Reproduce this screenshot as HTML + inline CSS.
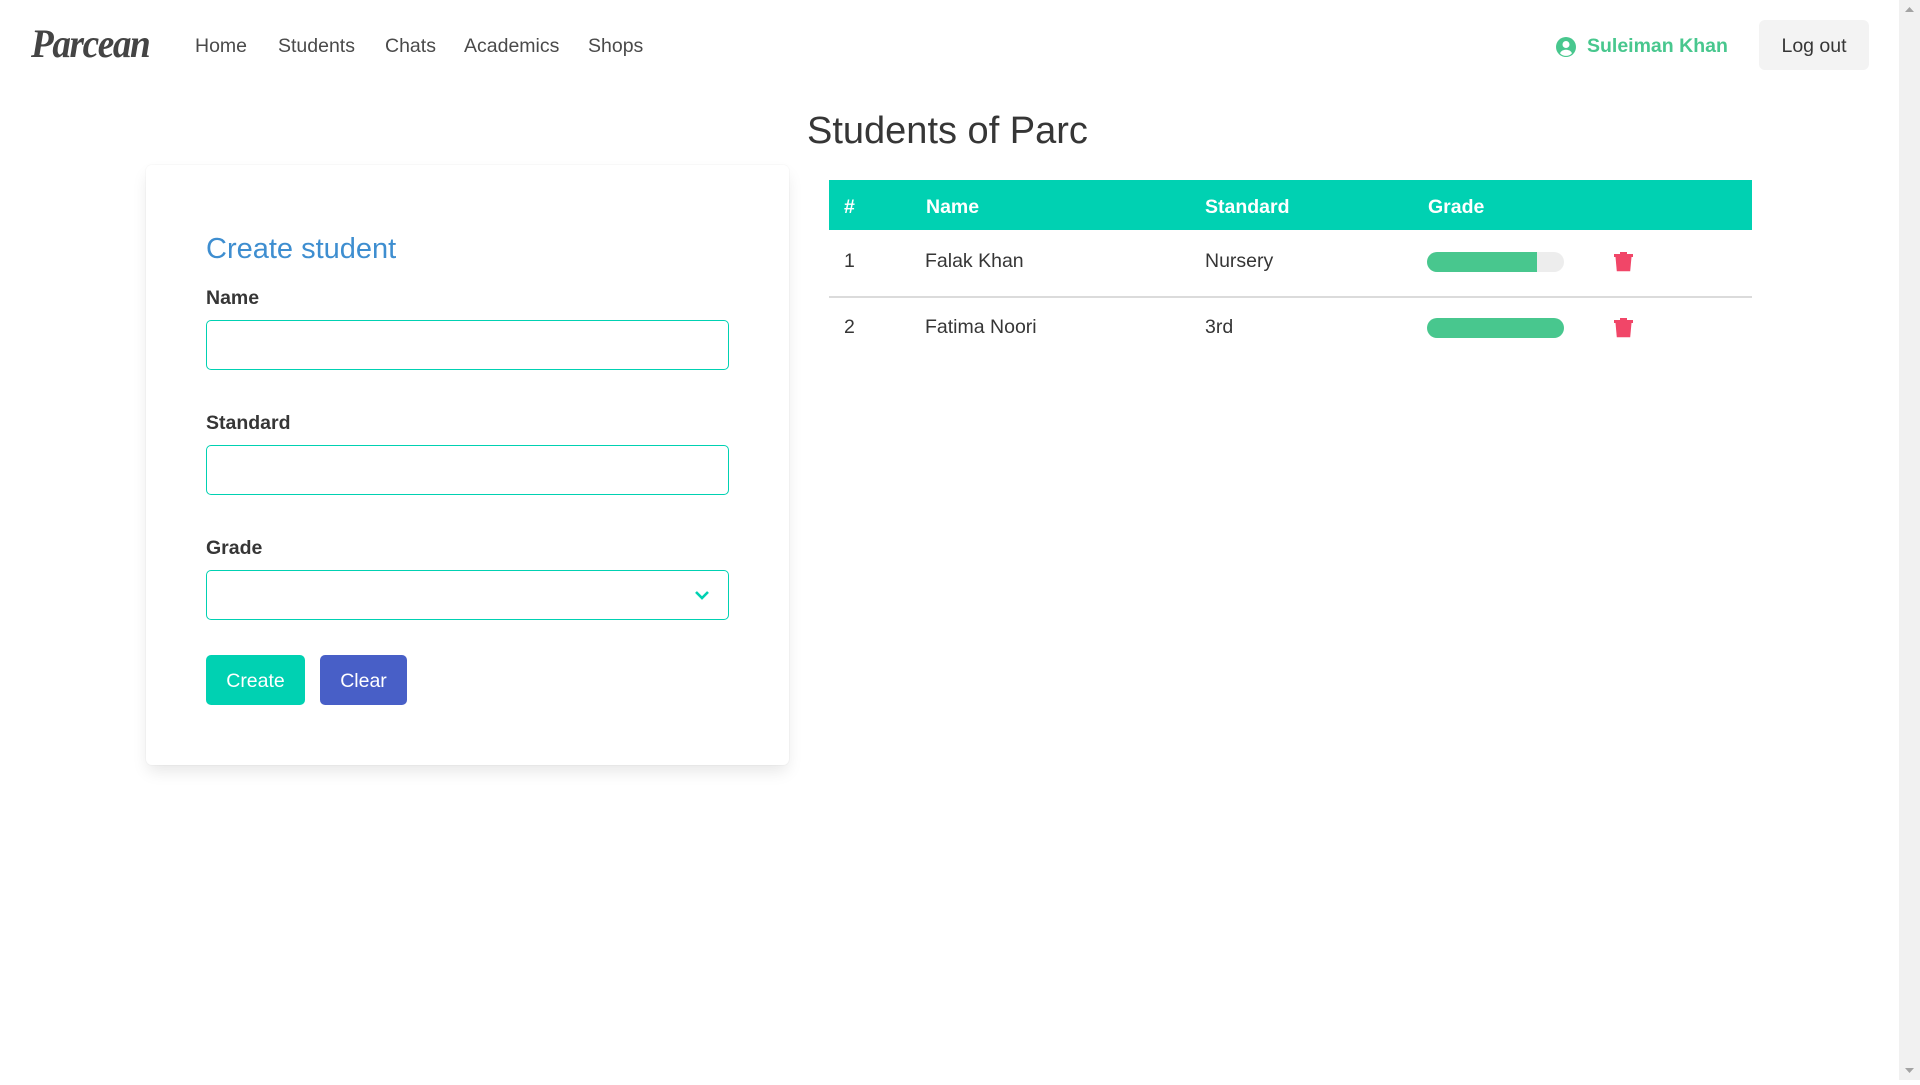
<!DOCTYPE html>
<html><head><meta charset="utf-8"><style>
*{box-sizing:border-box;margin:0;padding:0}
html,body{width:1920px;height:1080px;overflow:hidden;background:#fff;font-family:"Liberation Sans",sans-serif;color:#363636}
.logo{position:absolute;left:31px;top:20px;font-family:"Liberation Serif",serif;font-style:italic;font-weight:bold;font-size:40px;color:#444;letter-spacing:-1.5px;transform:scaleX(.93);transform-origin:left}
.nav a{position:absolute;top:35px;font-size:19.5px;color:#4a4a4a;text-decoration:none}
.user{position:absolute;left:1556px;top:35px;display:flex;align-items:center;color:#48c78e;font-weight:bold;font-size:19.5px}
.user svg{margin-right:11px}
.logout{position:absolute;left:1759px;top:20px;width:110px;height:50px;background:#f3f3f3;border-radius:6px;font-size:19.5px;color:#363636;display:flex;align-items:center;justify-content:center;padding-top:3px}
.sb{position:absolute;left:1899px;top:0;width:21px;height:1080px;background:#f1f1f1}
h1{position:absolute;left:807px;top:110px;font-size:38px;font-weight:normal;color:#363636}
.card{position:absolute;left:146px;top:165px;width:643px;height:600px;background:#fff;border-radius:6px;box-shadow:0 8px 16px -2px rgba(10,10,10,.1),0 0 0 1px rgba(10,10,10,.02)}
.ct{position:absolute;left:206px;top:233px;font-size:29px;color:#3e8ed0}
.lbl{position:absolute;left:206px;font-size:19.5px;font-weight:bold;color:#363636}
.inp{position:absolute;left:206px;width:523px;height:50px;border:1px solid #00d1b2;border-radius:5px}
.btn{position:absolute;top:655px;height:50px;border-radius:5px;color:#fff;font-size:19.5px;display:flex;align-items:center;justify-content:center;padding-top:3px}
.thead{position:absolute;left:829px;top:180px;width:923px;height:50px;background:#00d1b2;color:#fff;font-weight:bold;font-size:19.5px}
.c{position:absolute;font-size:19.5px}
.thead .c{top:16px}
.bar{position:absolute;left:1427px;width:137px;height:20px;border-radius:10px;background:#ededed;overflow:hidden}
.bar i{display:block;height:100%;background:#48c78e}
.hr{position:absolute;left:829px;top:296px;width:923px;height:2px;background:#dbdbdb}
</style></head><body>
<div class="logo">Parcean</div>
<div class="nav"><a style="left:195px">Home</a><a style="left:278px">Students</a><a style="left:385px">Chats</a><a style="left:464px">Academics</a><a style="left:588px">Shops</a></div>
<div class="user"><svg width="20" height="20" viewBox="0 0 20 20"><circle cx="10" cy="10" r="10" fill="#48c78e"/><circle cx="10" cy="7.5" r="3.5" fill="#fff"/><path d="M4 16.2c1.2-2.4 3.4-3.4 6-3.4s4.8 1 6 3.4A8 8 0 0 1 4 16.2z" fill="#fff"/></svg>Suleiman Khan</div>
<div class="logout">Log out</div>
<div class="sb"><svg width="21" height="1080"><path d="M6 12h9l-4.5-5z" fill="#a3a3a3"/><path d="M6 1068h9l-4.5 5z" fill="#a3a3a3"/></svg></div>
<h1>Students of Parc</h1>
<div class="card"></div>
<div class="ct">Create student</div>
<div class="lbl" style="top:287px">Name</div>
<div class="inp" style="top:320px"></div>
<div class="lbl" style="top:412px">Standard</div>
<div class="inp" style="top:445px"></div>
<div class="lbl" style="top:537px">Grade</div>
<div class="inp" style="top:570px"><svg style="position:absolute;right:18px;top:18px" width="16" height="12" viewBox="0 0 16 12"><path d="M2 3l6 6 6-6" stroke="#00d1b2" stroke-width="2.6" fill="none"/></svg></div>
<div class="btn" style="left:206px;width:99px;background:#00d1b2">Create</div>
<div class="btn" style="left:320px;width:87px;background:#485fc7">Clear</div>
<div class="thead"><span class="c" style="left:15px">#</span><span class="c" style="left:97px">Name</span><span class="c" style="left:376px">Standard</span><span class="c" style="left:599px">Grade</span></div>
<span class="c" style="left:844px;top:250px">1</span><span class="c" style="left:925px;top:250px">Falak Khan</span><span class="c" style="left:1205px;top:250px">Nursery</span>
<div class="bar" style="top:252px"><i style="width:110px"></i></div>
<svg style="position:absolute;left:1614px;top:252px" width="19" height="20" viewBox="0 0 19 20"><rect x="0" y="2" width="19" height="3" fill="#f14668"/><rect x="6" y="0" width="7" height="3" fill="#f14668"/><path d="M1.5 5h16l-1.3 14.2H2.8z" fill="#f14668"/></svg>
<div class="hr"></div>
<span class="c" style="left:844px;top:316px">2</span><span class="c" style="left:925px;top:316px">Fatima Noori</span><span class="c" style="left:1205px;top:316px">3rd</span>
<div class="bar" style="top:318px"><i style="width:137px"></i></div>
<svg style="position:absolute;left:1614px;top:318px" width="19" height="20" viewBox="0 0 19 20"><rect x="0" y="2" width="19" height="3" fill="#f14668"/><rect x="6" y="0" width="7" height="3" fill="#f14668"/><path d="M1.5 5h16l-1.3 14.2H2.8z" fill="#f14668"/></svg>
</body></html>
